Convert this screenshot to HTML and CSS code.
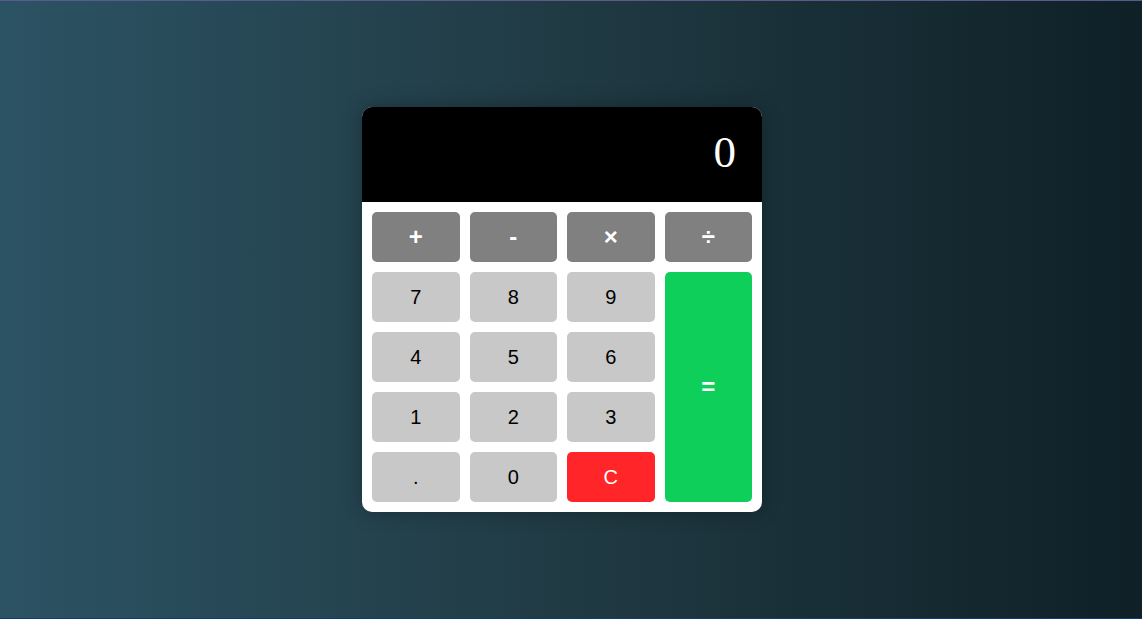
FILE: index.html
```html
<!DOCTYPE html>
<html>
<head>
<meta charset="utf-8">
<title>Calculator</title>
<link rel="stylesheet" href="styles.css">
</head>
<body>
<main class="page">
  <div class="calculator">
    <div class="display">0</div>
    <div class="keys">
      <button class="key op">+</button>
      <button class="key op">-</button>
      <button class="key op">×</button>
      <button class="key op">÷</button>
      <button class="key">7</button>
      <button class="key">8</button>
      <button class="key">9</button>
      <button class="key equals">=</button>
      <button class="key">4</button>
      <button class="key">5</button>
      <button class="key">6</button>
      <button class="key">1</button>
      <button class="key">2</button>
      <button class="key">3</button>
      <button class="key">.</button>
      <button class="key">0</button>
      <button class="key clear">C</button>
    </div>
  </div>
</main>
</body>
</html>
```
FILE: styles.css
```css
* { box-sizing: border-box; }
html, body { margin: 0; height: 100%; }
body {
  background: linear-gradient(to left, #0f2027, #203a43, #2c5364);
  border-top: 1px solid #5b5a8c;
  border-bottom: 1px solid #0b3c78;
  font-family: "Liberation Sans", Arial, sans-serif;
}
.page {
  height: 100%;
  display: flex;
  align-items: center;
  justify-content: center;
  padding-right: 18px;
}
.calculator {
  width: 400px;
  background: #fff;
  border-radius: 10px;
  overflow: hidden;
  box-shadow: 0 0 20px rgba(0, 0, 0, 0.3);
}
.display {
  background: #000;
  color: #fff;
  font-family: "Liberation Serif", "Times New Roman", serif;
  font-size: 45px;
  text-align: right;
  padding: 18px 26px 22px 26px;
  line-height: 55px;
  height: 95px;
}
.keys {
  display: grid;
  grid-template-columns: repeat(4, 1fr);
  grid-auto-rows: 50px;
  gap: 10px;
  padding: 10px;
}
.key {
  border: none;
  border-radius: 5px;
  background: #c8c8c8;
  color: #000;
  font-family: "Liberation Sans", Arial, sans-serif;
  font-size: 20px;
  padding: 0;
}
.op {
  background: #808080;
  color: #fff;
  font-weight: bold;
  font-size: 24px;
}
.equals {
  grid-column: 4;
  grid-row: 2 / span 4;
  background: #0dcf5a;
  color: #fff;
  font-weight: bold;
  font-size: 24px;
}
.clear {
  background: #ff2529;
  color: #fff;
}
```
